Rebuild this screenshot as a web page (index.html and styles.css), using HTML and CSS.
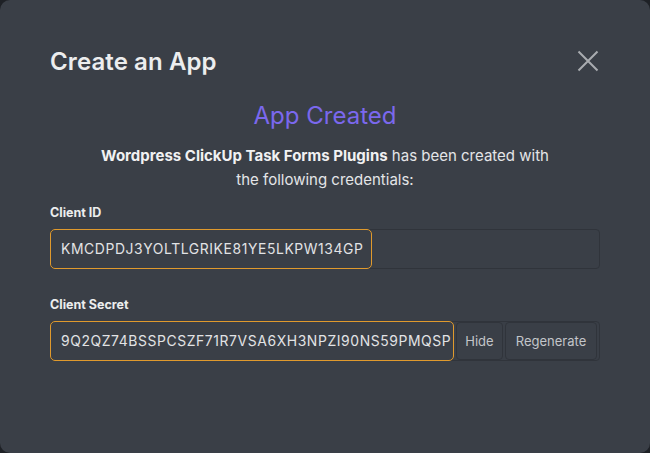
FILE: index.html
```html
<!DOCTYPE html>
<html>
<head>
<meta charset="utf-8">
<link rel="stylesheet" href="styles.css">
</head>
<body>
<div class="modal">
  <div class="header">
    <h1 class="title">Create an App</h1>
    <button class="close" aria-label="Close">
      <svg width="22" height="22" viewBox="0 0 22 22"><path d="M1.5 1.5 L20.5 20.5 M20.5 1.5 L1.5 20.5" stroke="#a9acb0" stroke-width="2" fill="none"/></svg>
    </button>
  </div>
  <h2 class="created">App Created</h2>
  <p class="desc"><strong>Wordpress ClickUp Task Forms Plugins</strong> has been created with<br>the following credentials:</p>
  <div class="field">
    <label class="label">Client ID</label>
    <div class="group">
      <div class="value value-id">KMCDPDJ3YOLTLGRIKE81YE5LKPW134GP</div>
    </div>
  </div>
  <div class="field">
    <label class="label">Client Secret</label>
    <div class="group">
      <div class="value value-secret">9Q2QZ74BSSPCSZF71R7VSA6XH3NPZI90NS59PMQSP</div>
      <button class="btn btn-hide">Hide</button>
      <button class="btn btn-regen">Regenerate</button>
    </div>
  </div>
</div>
</body>
</html>
```
FILE: styles.css
```css
* { box-sizing: border-box; }
html, body { margin: 0; padding: 0; }
body {
  background: #1e2126;
  width: 650px;
  height: 453px;
  font-family: "Inter", "Noto Sans", sans-serif;
}
.modal {
  width: 650px;
  height: 453px;
  background: #3a3f47;
  border-radius: 10px;
  padding: 48px 50px 0 50px;
  color: #e6e7e9;
}
.header {
  display: flex;
  justify-content: space-between;
  align-items: center;
  height: 26px;
}
.title {
  margin: 0;
  font-size: 24px;
  font-weight: 600;
  color: #ecedee;
  letter-spacing: 0.1px;
}
.close {
  background: none;
  border: 0;
  padding: 0;
  margin-right: 1px;
  width: 22px;
  height: 22px;
  display: flex;
}
.created {
  margin: 27px 0 0 0;
  text-align: center;
  font-size: 24px;
  font-weight: 400;
  color: #7b68ee;
  line-height: 30px;
}
.desc {
  margin: 13px 0 0 0;
  text-align: center;
  font-size: 15px;
  line-height: 24px;
  color: #e4e5e7;
}
.desc strong { font-weight: 700; color: #f1f1f2; }
.field { margin-top: 13px; }
.field + .field { margin-top: 28px; }
.label {
  display: block;
  font-size: 12.5px;
  font-weight: 700;
  color: #eceded;
  line-height: 16px;
  margin-bottom: 8px;
}
.group {
  display: flex;
  height: 40px;
  border: 1px solid #30343b;
  border-radius: 4px;
  align-items: stretch;
  gap: 2px;
}
.value {
  margin: -1px 0 -1px -1px;
  border: 1.5px solid #e09a2d;
  border-radius: 5px;
  display: flex;
  align-items: center;
  padding-left: 10px;
  font-size: 13.9px;
  letter-spacing: 0.6px;
  color: #e2e3e5;
  white-space: nowrap;
}
.value-id { width: 322px; }
.value-secret { width: 404px; }
.btn {
  background: #3a3f47;
  border: 1px solid #30343b;
  border-radius: 4px;
  color: #c3c5c9;
  font-family: inherit;
  font-size: 13px;
  padding: 0;
}
.btn-hide { width: 47px; }
.btn-regen { width: 92px; }
```
